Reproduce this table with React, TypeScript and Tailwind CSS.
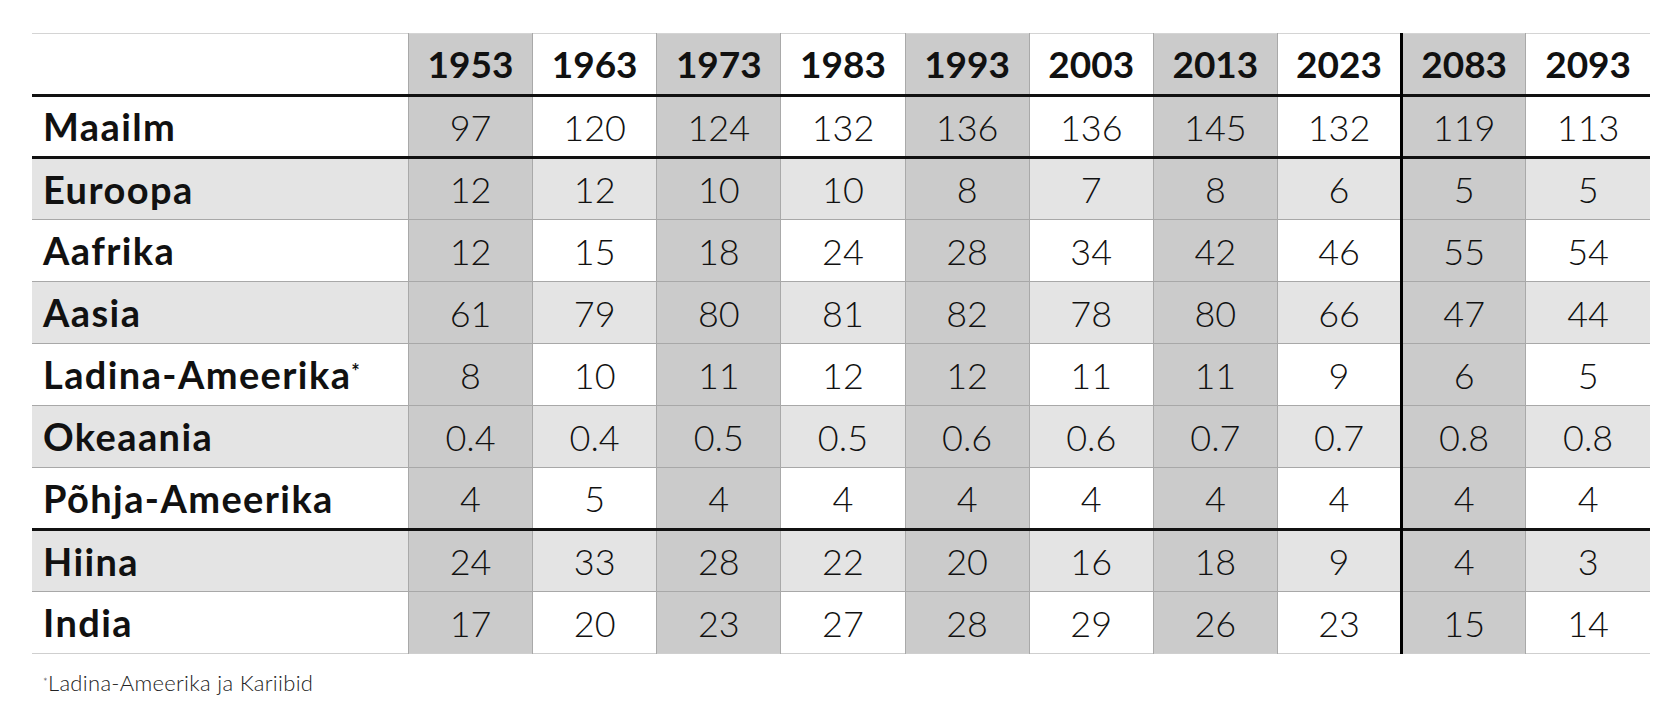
const YEARS = ["1953", "1963", "1973", "1983", "1993", "2003", "2013", "2023", "2083", "2093"];

type Row = { label: string; note?: boolean; values: string[]; shaded: boolean; thickBelow?: boolean };

const ROWS: Row[] = [
  { label: "Maailm", values: ["97", "120", "124", "132", "136", "136", "145", "132", "119", "113"], shaded: false, thickBelow: true },
  { label: "Euroopa", values: ["12", "12", "10", "10", "8", "7", "8", "6", "5", "5"], shaded: true },
  { label: "Aafrika", values: ["12", "15", "18", "24", "28", "34", "42", "46", "55", "54"], shaded: false },
  { label: "Aasia", values: ["61", "79", "80", "81", "82", "78", "80", "66", "47", "44"], shaded: true },
  { label: "Ladina-Ameerika", note: true, values: ["8", "10", "11", "12", "12", "11", "11", "9", "6", "5"], shaded: false },
  { label: "Okeaania", values: ["0.4", "0.4", "0.5", "0.5", "0.6", "0.6", "0.7", "0.7", "0.8", "0.8"], shaded: true },
  { label: "Põhja-Ameerika", values: ["4", "5", "4", "4", "4", "4", "4", "4", "4", "4"], shaded: false, thickBelow: true },
  { label: "Hiina", values: ["24", "33", "28", "22", "20", "16", "18", "9", "4", "3"], shaded: true },
  { label: "India", values: ["17", "20", "23", "27", "28", "29", "26", "23", "15", "14"], shaded: false },
];

// every other year column is darker; 2083 gets the heavy divider on its left
function cellClass(i: number, rowBg: string) {
  const dark = i % 2 === 0;
  const parts = ["w-[124px] p-0 text-center align-middle"];
  parts.push(dark ? "bg-[#cbcbcb] border-x border-x-[#a9a9a9]" : rowBg);
  if (i === 8) parts.push("border-l-[3px] border-l-black");
  return parts.join(" ");
}

export default function App() {
  return (
    <div className="min-h-screen bg-white font-['Lato','Liberation_Sans',sans-serif] text-[#111]">
      <div className="pl-[32px] pt-[33px]">
        <table className="w-[1618px] table-fixed border-collapse">
          <thead>
            <tr className="h-[62px] border-t border-t-[#d4d4d4] border-b-[3px] border-b-[#111]">
              <th className="w-[376px] bg-white p-0" />
              {YEARS.map((y, i) => (
                <th key={y} className={cellClass(i, "bg-white") + " text-[37px] font-bold"}>
                  {y}
                </th>
              ))}
            </tr>
          </thead>
          <tbody>
            {ROWS.map((r, ri) => {
              const rowBg = r.shaded ? "bg-[#e4e4e4]" : "bg-white";
              const last = ri === ROWS.length - 1;
              const bottom = r.thickBelow
                ? "border-b-[3px] border-b-[#111]"
                : last
                  ? "border-b border-b-[#cfcfcf]"
                  : "border-b border-b-[#a8a8a8]";
              return (
                <tr key={r.label} className={`h-[62px] ${bottom}`}>
                  <td className={`${rowBg} p-0 pl-[11px] text-left text-[38px] font-bold tracking-[1.4px] whitespace-nowrap`}>
                    {r.label}
                    {r.note ? <sup className="text-[20px] font-bold">*</sup> : null}
                  </td>
                  {r.values.map((v, i) => (
                    <td key={i} className={cellClass(i, rowBg) + " text-[36px] font-light"}>
                      {v}
                    </td>
                  ))}
                </tr>
              );
            })}
          </tbody>
        </table>
        <p className="mt-[12px] pl-[11px] text-[22px] font-light tracking-[0.3px] text-[#222]">
          <sup className="text-[11px]">*</sup>Ladina-Ameerika ja Kariibid
        </p>
      </div>
    </div>
  );
}
